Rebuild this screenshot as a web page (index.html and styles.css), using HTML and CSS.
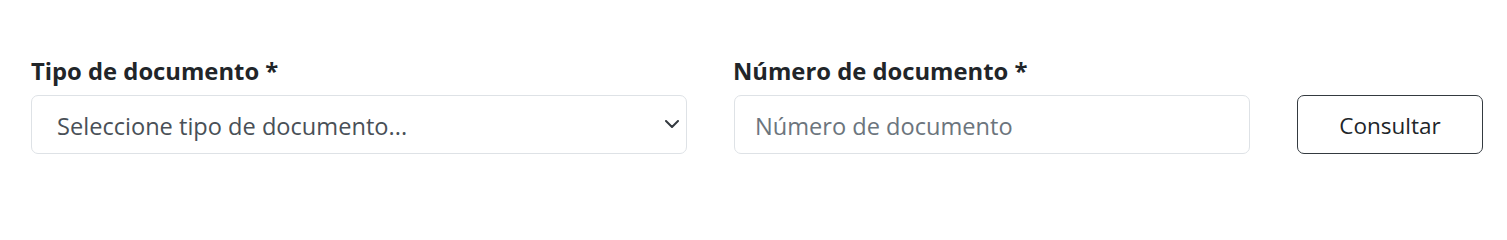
FILE: index.html
```html
<!DOCTYPE html>
<html lang="es">
<head>
<meta charset="utf-8">
<title>Consulta de documento</title>
<link rel="stylesheet" href="styles.css">
</head>
<body>
<form class="search-form">
  <div class="field field-type">
    <label class="field-label" for="tipo">Tipo de documento *</label>
    <div class="select-wrap">
      <select id="tipo" class="form-select">
        <option>Seleccione tipo de documento...</option>
      </select>
      <svg class="chevron" width="14" height="8" viewBox="0 0 14 8" aria-hidden="true">
        <path d="M1 1l6 6 6-6" fill="none" stroke="#343a40" stroke-width="2" stroke-linecap="round" stroke-linejoin="round"/>
      </svg>
    </div>
  </div>
  <div class="field field-number">
    <label class="field-label" for="numero">Número de documento *</label>
    <input id="numero" class="form-input" type="text" placeholder="Número de documento">
  </div>
  <button type="button" class="btn-consultar">Consultar</button>
</form>
</body>
</html>
```

FILE: styles.css
```css
html, body {
  margin: 0;
  padding: 0;
  background: #ffffff;
}

body {
  font-family: "Open Sans", "Noto Sans", sans-serif;
  color: #212529;
}

.search-form {
  display: flex;
  align-items: flex-end;
  gap: 47px;
  padding: 56px 0 0 31px;
}

.field {
  display: flex;
  flex-direction: column;
}

.field-type {
  width: 656px;
}

.field-number {
  width: 516px;
}

.field-label {
  font-size: 23.8px;
  font-weight: 700;
  line-height: 30px;
  margin-bottom: 9px;
  color: #212529;
}

.field-number .field-label {
  margin-left: -1px;
}

.select-wrap {
  position: relative;
}

.form-select,
.form-input {
  box-sizing: border-box;
  width: 100%;
  height: 59px;
  border: 1px solid #dee2e6;
  border-radius: 7px;
  background: #ffffff;
  font-family: inherit;
  font-size: 23.6px;
  line-height: 32px;
  margin: 0;
  outline: none;
}

.form-select {
  appearance: none;
  -webkit-appearance: none;
  padding: 3px 48px 0 25px;
  color: #495057;
}

.chevron {
  position: absolute;
  right: 8px;
  top: 25px;
  pointer-events: none;
}

.form-input {
  padding: 3px 20px 0 20px;
  color: #212529;
}

.form-input::placeholder {
  color: #6c757d;
  opacity: 1;
}

.btn-consultar {
  box-sizing: border-box;
  width: 186px;
  height: 59px;
  border: 1px solid #343a40;
  border-radius: 7px;
  background: #ffffff;
  color: #212529;
  font-family: inherit;
  font-size: 22.5px;
  line-height: 32px;
  padding: 2px 0 0 0;
  margin: 0;
  cursor: pointer;
}
```
